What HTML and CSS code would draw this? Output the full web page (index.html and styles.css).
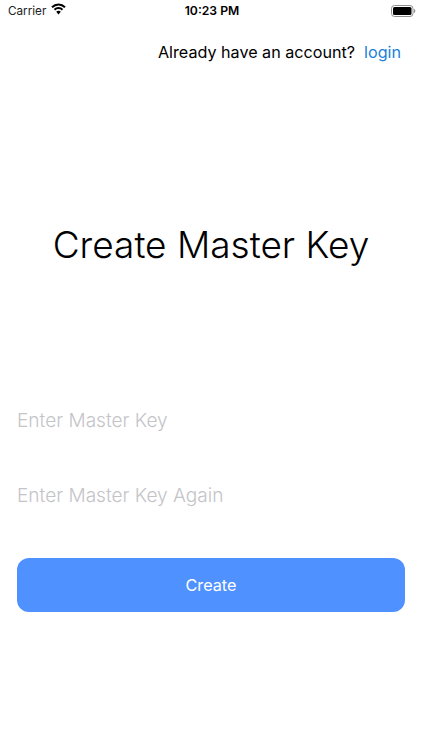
FILE: index.html
```html
<!DOCTYPE html>
<html lang="en">
<head>
    <meta charset="UTF-8">
    <title>Create Master Key</title>
    <link rel="stylesheet" href="styles.css">
</head>
<body>
    <div id="container">
        <div class="status-bar">
            <div class="status-left">
                <span class="carrier">Carrier</span>
                <svg class="wifi" width="15" height="12" viewBox="0 0 15 12">
                    <path d="M1 4.300C2.700 2.600 5 1.500 7.500 1.500s4.800 1.100 6.500 2.800" fill="none" stroke="#000" stroke-width="2"/>
                    <path d="M3.500 6.800C4.500 5.800 5.900 5.100 7.500 5.100s3 .7 4 1.700" fill="none" stroke="#000" stroke-width="2"/>
                    <path d="M7.500 7.700c-.9 0-1.700.4-2.300 1l2.300 2.700 2.300-2.700c-.6-.6-1.400-1-2.300-1z"/>
                </svg>
            </div>
            <span class="clock">10:23 PM</span>
            <svg class="battery" width="25" height="12" viewBox="0 0 25 12">
                <rect x="0.500" y="0.500" width="21.500" height="11" rx="3" fill="none" stroke="#8e8e8e"/>
                <rect x="2" y="2" width="18.500" height="8" rx="1.500" fill="#000"/>
                <path d="M23 4v4c.8-.3 1.300-1.100 1.300-2S23.800 4.300 23 4z" fill="#8e8e8e"/>
            </svg>
        </div>
        <div class="top-row">
            <span class="question">Already have an account?</span>
            <a class="login">login</a>
        </div>
        <h1 class="title">Create Master Key</h1>
        <div class="form">
            <div class="field">Enter Master Key</div>
            <div class="field">Enter Master Key Again</div>
            <div class="create-btn">Create</div>
        </div>
    </div>
</body>
</html>
```

FILE: styles.css
```css
*{
    padding:0;
    margin:0;
    box-sizing:border-box;
}
body{
    background:#fff;
    font-family:"Inter","Liberation Sans",sans-serif;
    color:#000;
}
#container{
    width:422px;
    height:750px;
    overflow:hidden;
}
.status-bar{
    height:21px;
    padding:0 6px 0 8px;
    display:grid;
    grid-template-columns:1fr auto 1fr;
    align-items:center;
}
.status-left{
    display:flex;
    align-items:center;
    gap:5px;
}
.carrier{
    font-size:11.700px;
    color:#222;
}
.wifi{
    margin-top:-3px;
}
.clock{
    font-size:12.200px;
    font-weight:600;
}
.battery{
    justify-self:end;
}
.top-row{
    display:flex;
    justify-content:flex-end;
    gap:9px;
    padding:21px 21px 0 0;
    font-size:16.150px;
    line-height:20px;
}
.login{
    color:#1a80d9;
}
.title{
    margin-top:160px;
    text-align:center;
    font-size:37px;
    line-height:46px;
    font-weight:300;
}
.form{
    margin-top:132px;
    padding:0 17px;
}
.field{
    height:40px;
    margin-bottom:35px;
    display:flex;
    align-items:center;
    font-size:19.100px;
    font-weight:300;
    color:#c4c4c8;
}
.create-btn{
    height:54px;
    margin-top:43px;
    background:#4f92ff;
    border-radius:12px;
    color:#fff;
    display:flex;
    align-items:center;
    justify-content:center;
    font-size:16.200px;
    font-weight:400;
}
```
